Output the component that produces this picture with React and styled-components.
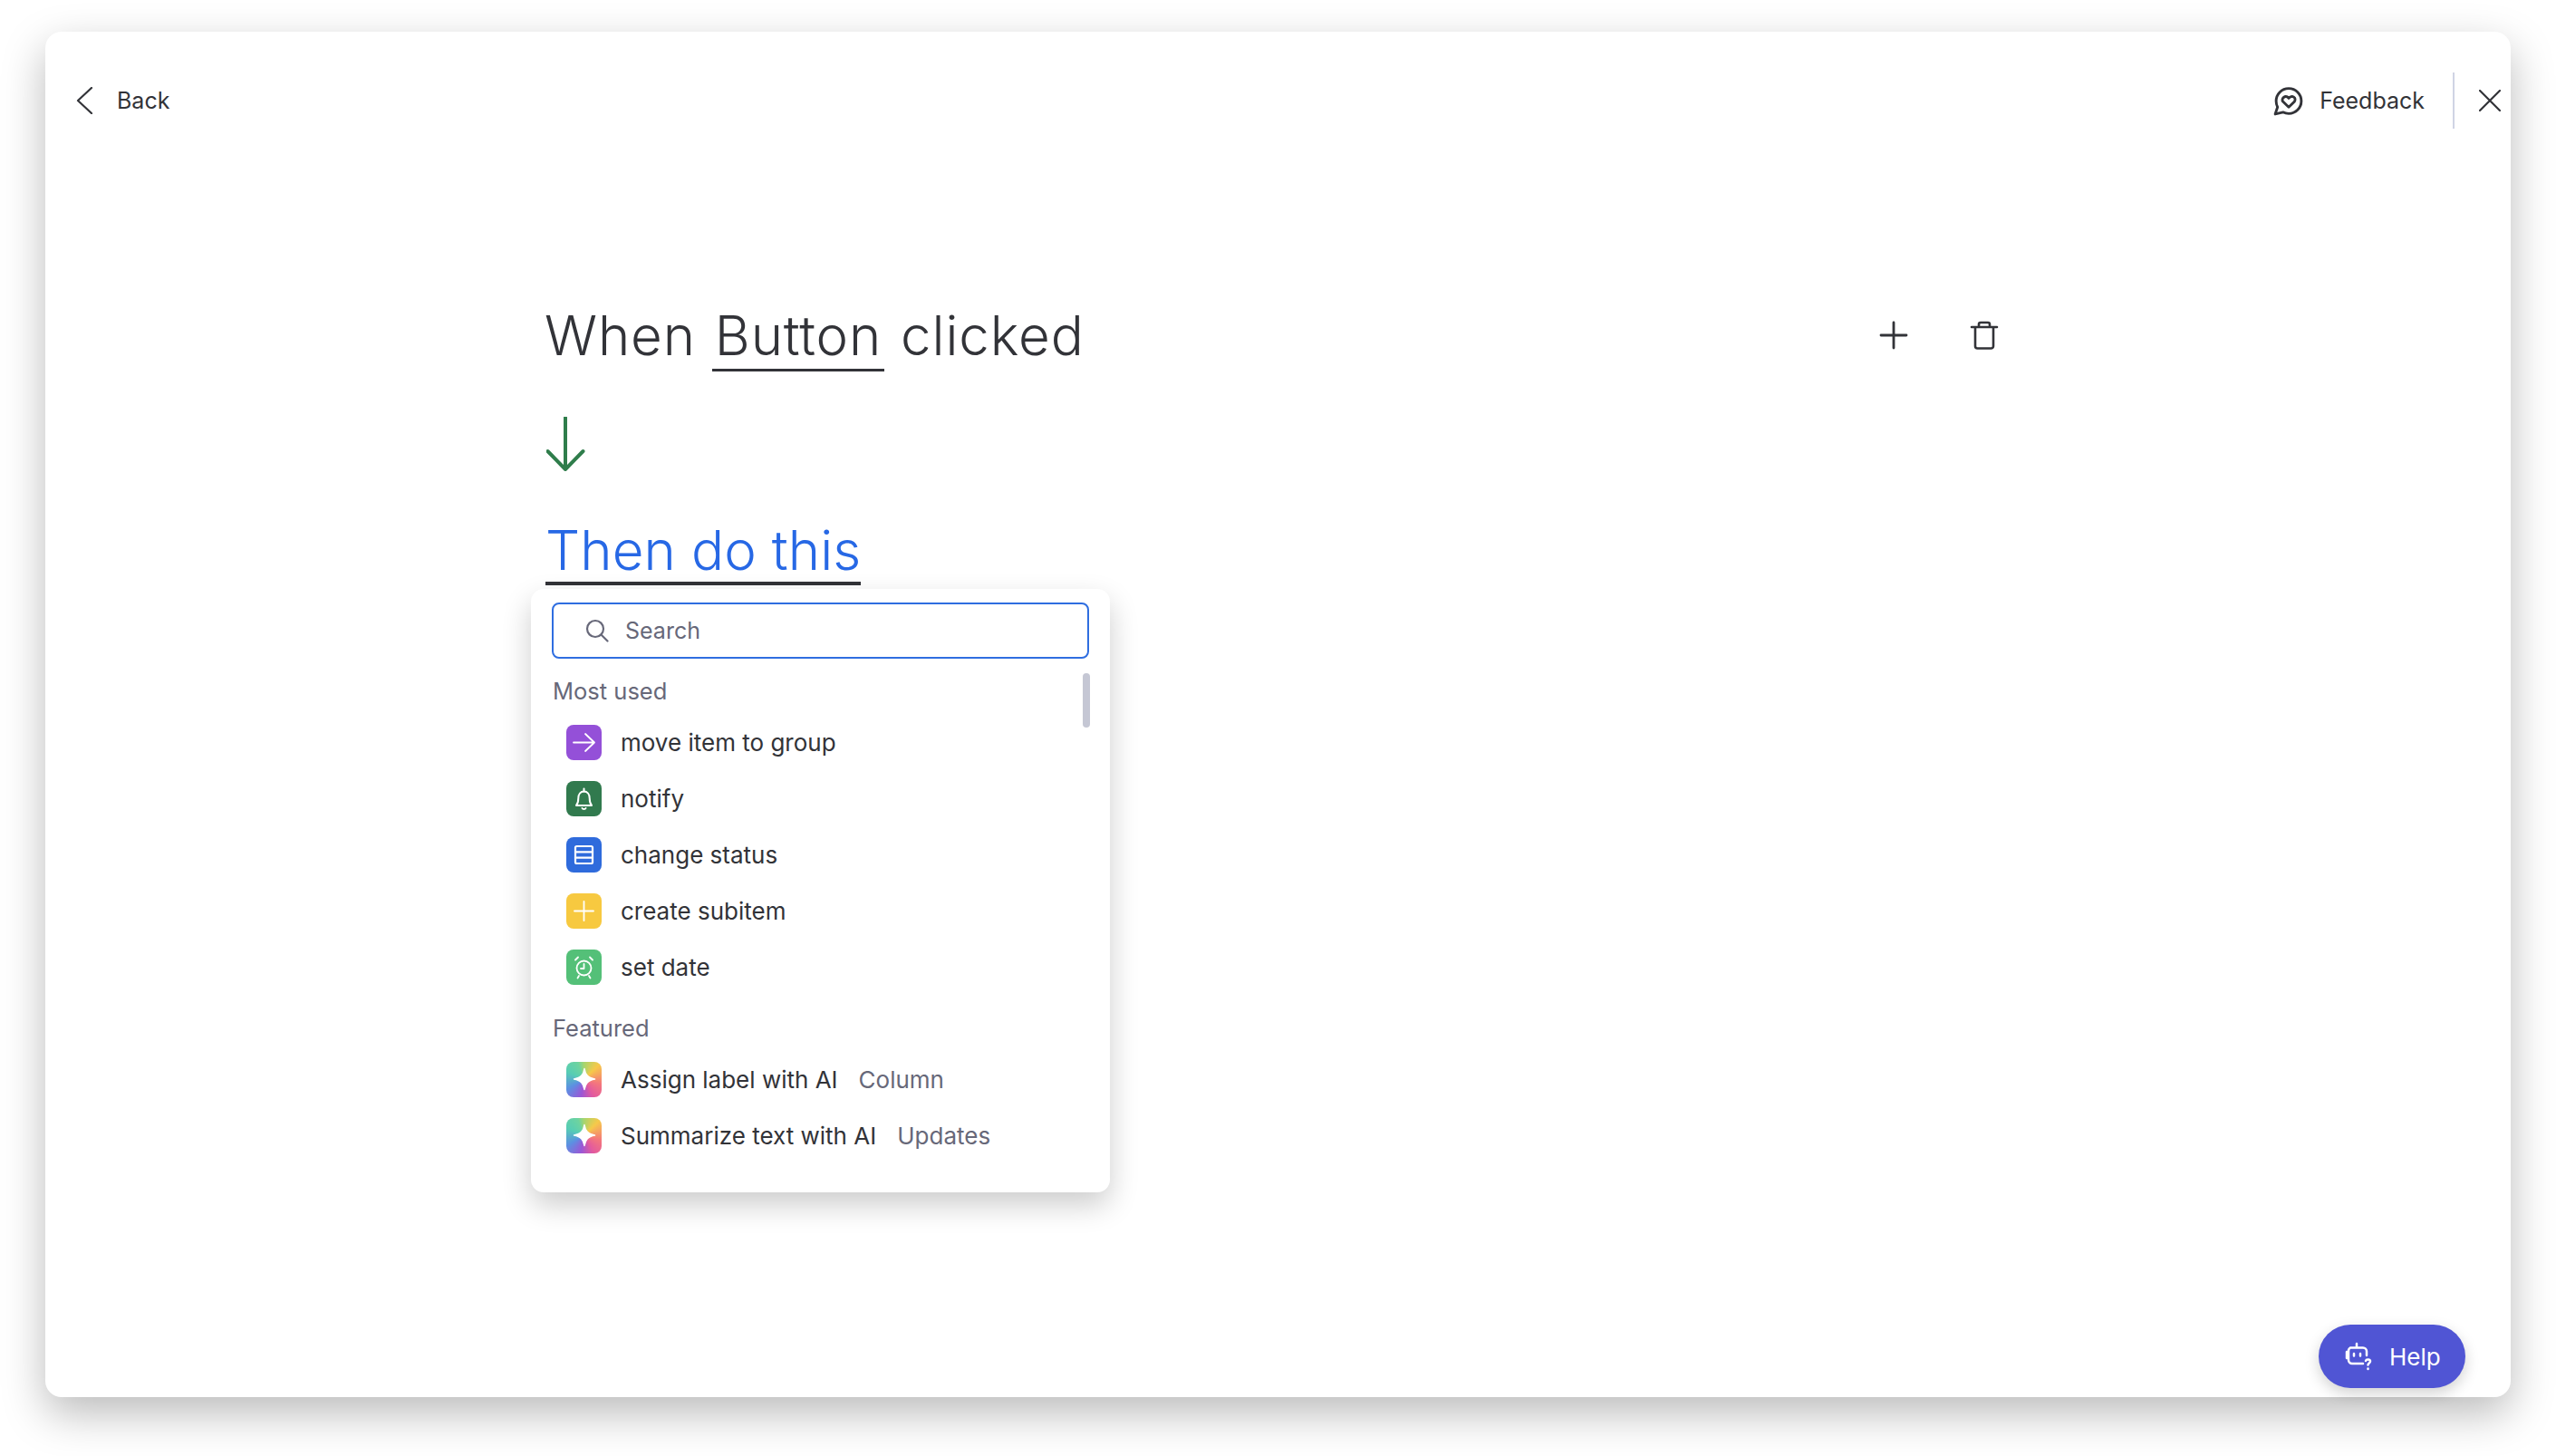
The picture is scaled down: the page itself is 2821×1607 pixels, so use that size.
import * as React from 'react';
import styled, { createGlobalStyle } from 'styled-components';

const GlobalStyle = createGlobalStyle`
  html, body {
    margin: 0;
    background: #ffffff;
    font-family: "Inter", "Liberation Sans", sans-serif;
    color: #323338;
  }
  * { box-sizing: border-box; }
`;

const Page = styled.div`
  width: 2821px;
  height: 1607px;
  padding: 35px 50px 65px;
  overflow: hidden;
`;

const Window = styled.div`
  position: relative;
  height: 1507px;
  padding-top: 45px;
  background: #ffffff;
  border-radius: 18px;
  box-shadow: 0 18px 48px rgba(0, 0, 0, 0.27);
`;

const Header = styled.div`
  display: flex;
  align-items: center;
  justify-content: space-between;
  height: 62px;
  padding: 0 11px 0 34px;
`;

const HeaderGroup = styled.div`
  display: flex;
  align-items: center;
`;

const BackLink = styled.div`
  display: flex;
  align-items: center;
  gap: 15px;
  font-size: 25px;
  color: #323338;
`;

const FeedbackLink = styled.div`
  display: flex;
  align-items: center;
  gap: 17px;
  font-size: 25px;
  padding-right: 31px;
`;

const CloseBox = styled.div`
  display: flex;
  align-items: center;
  height: 62px;
  padding-left: 27px;
  border-left: 2px solid #d0d4e4;
`;

const Content = styled.div`
  padding: 183px 0 0 553px;
`;

const TitleRow = styled.div`
  display: flex;
  align-items: center;
  justify-content: space-between;
  width: 1603px;
  height: 90px;
`;

const Title = styled.div`
  margin-left: -2px;
  font-size: 60px;
  font-weight: 300;
  line-height: 84px;
  letter-spacing: 0.9px;
  color: #323338;
  white-space: pre;
`;

const Picked = styled.span`
  display: inline-block;
  line-height: 74px;
  padding: 0 3px;
  border-bottom: 3px solid #323338;
`;

const RowActions = styled.div`
  display: flex;
  align-items: center;
  gap: 68px;
`;

const ArrowWrap = styled.div`
  margin: 45px 0 0;
  height: 60px;
`;

const Then = styled.div`
  display: inline-block;
  margin-top: 52px;
  margin-left: -1px;
  font-size: 60px;
  font-weight: 300;
  line-height: 70px;
  letter-spacing: 0.1px;
  color: #2768e5;
  border-bottom: 4px solid #323338;
`;

const Dropdown = styled.div`
  width: 639px;
  height: 666px;
  margin: 4px 0 0 -17px;
  padding: 15px 23px 0;
  background: #ffffff;
  border-radius: 14px;
  box-shadow: 0 14px 32px rgba(0, 0, 0, 0.2);
  position: relative;
`;

const SearchBox = styled.div`
  display: flex;
  align-items: center;
  gap: 18px;
  height: 62px;
  padding-left: 35px;
  border: 2px solid #2f6ee0;
  border-radius: 8px;
  font-size: 25px;
  color: #676879;
`;

const Scrollbar = styled.div`
  position: absolute;
  top: 93px;
  right: 22px;
  width: 8px;
  height: 60px;
  border-radius: 4px;
  background: #c5c7d4;
`;

const SectionLabel = styled.div`
  font-size: 25.5px;
  line-height: 32px;
  height: 32px;
  margin: ${({ $top }) => $top}px 0 ${({ $bottom }) => $bottom}px 1px;
  color: #676879;
`;

const Item = styled.div`
  display: flex;
  align-items: center;
  height: 62px;
  padding-left: 16px;
  font-size: 26px;
  color: #323338;
`;

const ItemIcon = styled.div`
  display: flex;
  align-items: center;
  justify-content: center;
  width: 39px;
  height: 39px;
  margin-right: 21px;
  border-radius: 8px;
  background: ${({ $bg }) => $bg};
`;

const Tag = styled.span`
  margin-left: 23px;
  color: #676879;
`;

const HelpButton = styled.div`
  position: absolute;
  right: 50px;
  bottom: 10px;
  display: flex;
  align-items: center;
  gap: 18px;
  width: 162px;
  height: 70px;
  padding-left: 28px;
  border-radius: 35px;
  background: #5055d4;
  color: #ffffff;
  font-size: 26px;
  box-shadow: 0 6px 16px rgba(0, 0, 0, 0.18);
`;

const aiGradient = `conic-gradient(from 0deg at 50% 50%, #a6d56e, #f6c94a 45deg, #f4777c 105deg, #e35a9e 150deg, #9a57d6 190deg, #5c90e2 240deg, #57cdb4 295deg, #6dd3a0 340deg, #a6d56e)`;

function Stroke({ size, view = 24, color = '#323338', width = 2, children }) {
  return (
    <svg width={size} height={size} viewBox={`0 0 ${view} ${view}`} fill="none" stroke={color} strokeWidth={width} strokeLinecap="round" strokeLinejoin="round">
      {children}
    </svg>
  );
}

const AiStar = () => (
  <svg width="26" height="26" viewBox="0 0 26 26">
    <path d="M13 1.500c1 6.500 3.500 10 11.500 11.500-8 1.500-10.500 5-11.500 11.500C12 18 9.500 14.500 1.500 13 9.500 11.500 12 8 13 1.500z" fill="#fff" stroke="#fff" strokeWidth="1.500" strokeLinejoin="round" />
  </svg>
);

const items = [
  {
    label: 'move item to group',
    bg: '#9450d8',
    icon: (
      <Stroke size={29} view={29} color="#fff" width={1.8}>
        <path d="M3 14.500h23M16 5l10 9.500L16 24" />
      </Stroke>
    ),
  },
  {
    label: 'notify',
    bg: '#317a4e',
    icon: (
      <Stroke size={29} view={29} color="#fff" width={2}>
        <path d="M6 22c1.700-2 2.300-4 2.300-8 0-4.500 2.500-7.500 6.200-7.500s6.200 3 6.200 7.500c0 4 .6 6 2.300 8z" />
        <path d="M14.500 3.500v3M12.500 25c.5 1.300 3.500 1.300 4 0" />
      </Stroke>
    ),
  },
  {
    label: 'change status',
    bg: '#2f6bdc',
    icon: (
      <Stroke size={29} view={29} color="#fff" width={2.2}>
        <rect x="5" y="5" width="19" height="19" rx="1.500" />
        <path d="M5 11.300h19M5 17.700h19" />
      </Stroke>
    ),
  },
  {
    label: 'create subitem',
    bg: '#f7c940',
    icon: (
      <Stroke size={29} view={29} color="#fff" width={1.8}>
        <path d="M14.500 4v21M4 14.500h21" />
      </Stroke>
    ),
  },
  {
    label: 'set date',
    bg: '#54c078',
    icon: (
      <Stroke size={29} view={29} color="#fff" width={1.8}>
        <circle cx="14.500" cy="15.500" r="8" />
        <path d="M14.500 11v5h-3.500M5 6.500l3-3M24 6.500l-3-3M9 24l-1.500 2.500M20 24l1.500 2.500" />
      </Stroke>
    ),
  },
];

const featured = [
  { label: 'Assign label with AI', tag: 'Column' },
  { label: 'Summarize text with AI', tag: 'Updates' },
];

export default function App() {
  return (
    <Page>
      <GlobalStyle />
      <Window>
        <Header>
          <BackLink>
            <Stroke size={30} view={30} width={2.2}>
              <path d="M17 1L2 15l15 14" />
            </Stroke>
            Back
          </BackLink>
          <HeaderGroup>
            <FeedbackLink>
              <Stroke size={35} view={34} width={2.8}>
                <path d="M17.500 3.500c7.500 0 13.500 6 13.500 13.500s-6 13.500-13.500 13.500c-2.200 0-4.300-.5-6.100-1.500L3 31l2.500-7.500C4.500 21.500 4 19.300 4 17 4 9.500 10 3.500 17.500 3.500z" />
                <path d="M17.500 23.500l-6-5.700c-3-3.300 2.500-8 6-3.800 3.500-4.200 9-.5 6 3.800z" />
              </Stroke>
              Feedback
            </FeedbackLink>
            <CloseBox>
              <Stroke size={24} view={24} width={2.2}>
                <path d="M1 1l22 22M23 1L1 23" />
              </Stroke>
            </CloseBox>
          </HeaderGroup>
        </Header>

        <Content>
          <TitleRow>
            <Title>
              When <Picked>Button</Picked> clicked
            </Title>
            <RowActions>
              <Stroke size={32} view={32} width={2.8}>
                <path d="M16 2v28M2 16h28" />
              </Stroke>
              <Stroke size={32} view={32} width={2.6}>
                <path d="M2 7h28M6 7v21a2.500 2.500 0 0 0 2.500 2.500h15A2.500 2.500 0 0 0 26 28V7M10 7V4a2 2 0 0 1 2-2h8a2 2 0 0 1 2 2v3" />
              </Stroke>
            </RowActions>
          </TitleRow>

          <ArrowWrap>
            <Stroke size={60} view={60} color="#2f7d4b" width={4}>
              <path d="M21 1v57M1.500 38L21 58l19.500-20" />
            </Stroke>
          </ArrowWrap>

          <Then>Then do this</Then>

          <Dropdown>
            <SearchBox>
              <Stroke size={26} view={26} color="#676879" width={2.2}>
                <circle cx="11" cy="11" r="9" />
                <path d="M17.500 17.500l7 7" />
              </Stroke>
              Search
            </SearchBox>
            <Scrollbar />

            <SectionLabel $top={20} $bottom={9}>Most used</SectionLabel>
            {items.map((item) => (
              <Item key={item.label}>
                <ItemIcon $bg={item.bg}>{item.icon}</ItemIcon>
                {item.label}
              </Item>
            ))}

            <SectionLabel $top={21} $bottom={9}>Featured</SectionLabel>
            {featured.map((item) => (
              <Item key={item.label}>
                <ItemIcon $bg={aiGradient}><AiStar /></ItemIcon>
                {item.label}
                <Tag>{item.tag}</Tag>
              </Item>
            ))}
          </Dropdown>
        </Content>

        <HelpButton>
          <Stroke size={32} view={32} color="#fff" width={2.5}>
            <path d="M14 2v4M7 6.500h14a4 4 0 0 1 4 4V15M3 11v7M21 24H9a4 4 0 0 1-4-4V10.500a4 4 0 0 1 2-4" />
            <path d="M11 13v2.500M18 13v2.500" />
            <path d="M24 21c.5-2 5-2 5 .5 0 2-2.500 1.800-2.500 4M26.500 29.500v.5" />
          </Stroke>
          Help
        </HelpButton>
      </Window>
    </Page>
  );
}
